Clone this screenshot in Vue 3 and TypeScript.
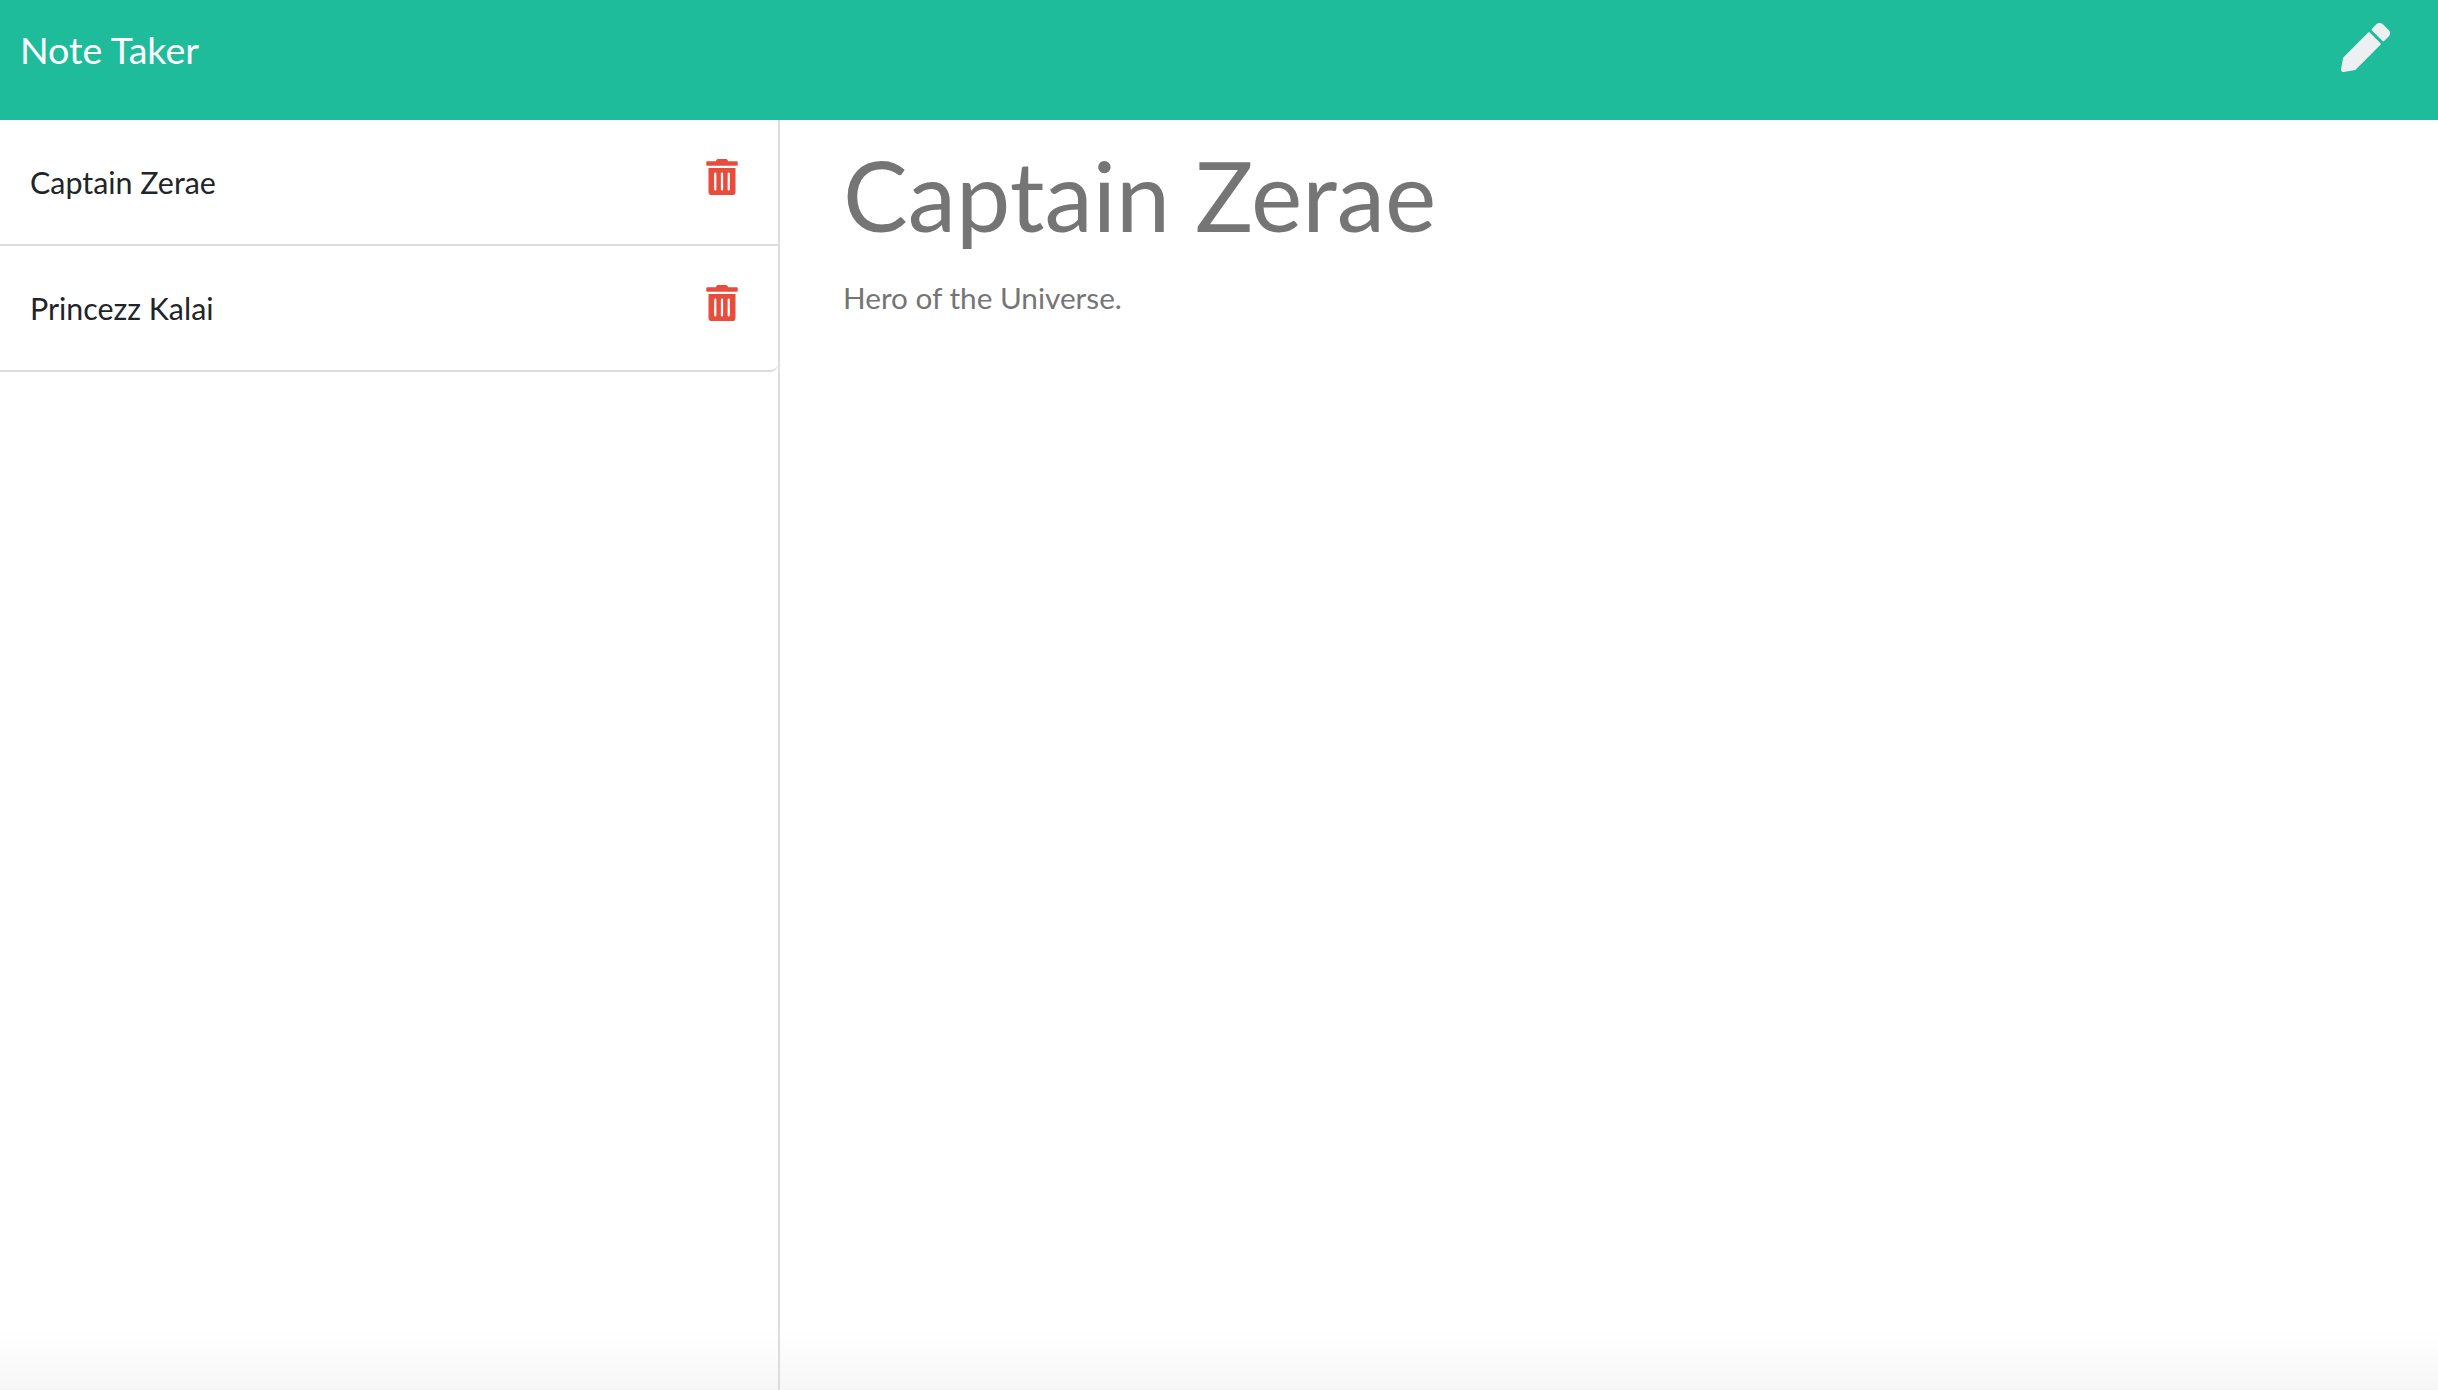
<template>
  <div class="page">
    <!-- HEADER -->
    <header class="navbar">
      <a class="brand">Note Taker</a>
      <svg class="pencil" viewBox="0 0 512 512" aria-hidden="true">
        <path d="M497.9 142.1l-46.1 46.1c-4.7 4.7-12.3 4.7-17 0l-111-111c-4.7-4.7-4.7-12.3 0-17l46.1-46.1c18.7-18.7 49.1-18.7 67.9 0l60.1 60.1c18.8 18.7 18.8 49.1 0 67.9zM284.2 99.8L21.6 362.4.4 483.9c-2.9 16.4 11.4 30.6 27.8 27.8l121.5-21.3 262.6-262.6c4.7-4.7 4.7-12.3 0-17l-111-111c-4.8-4.7-12.4-4.7-17.1 0z" />
      </svg>
    </header>

    <main class="content">
      <!-- LISTA DE NOTAS -->
      <aside class="sidebar">
        <ul class="note-list">
          <li v-for="note in notes" :key="note.title" class="note-item">
            <span class="note-name">{{ note.title }}</span>
            <svg class="trash" viewBox="0 0 448 512" aria-hidden="true">
              <path d="M32 464a48 48 0 0 0 48 48h288a48 48 0 0 0 48-48V128H32zm272-256a16 16 0 0 1 32 0v224a16 16 0 0 1-32 0zm-96 0a16 16 0 0 1 32 0v224a16 16 0 0 1-32 0zm-96 0a16 16 0 0 1 32 0v224a16 16 0 0 1-32 0zM432 32H312l-9.4-18.7A24 24 0 0 0 281.1 0H166.8a23.72 23.72 0 0 0-21.4 13.3L136 32H16A16 16 0 0 0 0 48v32a16 16 0 0 0 16 16h416a16 16 0 0 0 16-16V48a16 16 0 0 0-16-16z" />
            </svg>
          </li>
        </ul>
      </aside>

      <!-- NOTA ACTIVA -->
      <section class="detail">
        <h1 class="detail-title">{{ activeNote.title }}</h1>
        <p class="detail-text">{{ activeNote.text }}</p>
      </section>
    </main>
  </div>
</template>

<script setup lang="ts">
interface Note {
  title: string
  text: string
}

const notes: Note[] = [
  { title: 'Captain Zerae', text: 'Hero of the Universe.' },
  { title: 'Princezz Kalai', text: '' }
]

const activeNote = notes[0]
</script>

<style scoped>
.page {
  height: 1390px;
  display: flex;
  flex-direction: column;
  font-family: Lato, "Liberation Sans", sans-serif;
  overflow: hidden;
}

.navbar {
  height: 120px;
  flex: none;
  box-sizing: border-box;
  padding: 23px 48px 0 20px;
  display: flex;
  justify-content: space-between;
  align-items: flex-start;
  background: #1fbc9c;
}

.brand {
  margin-top: 1px;
  font-size: 37.6px;
  line-height: 52px;
  color: #fff;
}

.pencil {
  width: 49px;
  height: 49px;
  fill: #ecf0f1;
}

.content {
  flex: 1;
  display: flex;
  background: linear-gradient(to bottom, #fff calc(100% - 60px), #f6f6f6 100%);
}

.sidebar {
  width: 780px;
  flex: none;
  box-sizing: border-box;
  border-right: 2px solid #ddd;
}

.note-list {
  margin: 0;
  padding: 0;
  list-style: none;
}

.note-item {
  height: 126px;
  box-sizing: border-box;
  padding: 38px 40px 0 30px;
  display: flex;
  justify-content: space-between;
  align-items: flex-start;
  border-bottom: 2px solid #ddd;
  background: #fff;
}

.note-item:last-child {
  border-bottom-right-radius: 8px;
}

.note-name {
  font-size: 30.4px;
  line-height: 48px;
  color: #212529;
}

.trash {
  width: 32px;
  height: 36px;
  margin-top: 1px;
  fill: #e74c3c;
}

.detail {
  flex: 1;
  padding: 17px 0 0 63px;
}

.detail-title {
  margin: 0;
  font-size: 97px;
  font-weight: 400;
  line-height: 116px;
  color: #757575;
}

.detail-text {
  margin: 21px 0 0;
  font-size: 29.7px;
  line-height: 48px;
  color: #757575;
}
</style>

<style>
html,
body {
  margin: 0;
  background: #fff;
}
</style>
